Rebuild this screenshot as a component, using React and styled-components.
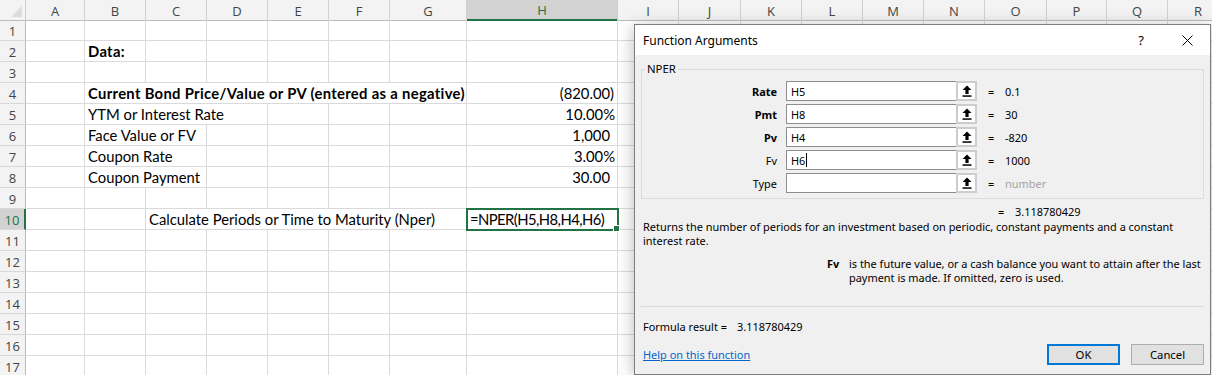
import React from 'react'
import styled, { createGlobalStyle } from 'styled-components'

const GlobalStyle = createGlobalStyle`
  html, body {
    margin: 0;
    padding: 0;
    overflow: hidden;
    background: #ffffff;
  }
`

const COLS = ['A', 'B', 'C', 'D', 'E', 'F', 'G', 'H', 'I', 'J', 'K', 'L', 'M', 'N', 'O', 'P', 'Q', 'R']
const WIDTHS = [26, 59, 61, 61, 61, 61, 61, 77, 151, 61, 62, 61, 61, 61, 61, 62, 60, 61, 61]
const TEMPLATE = WIDTHS.map((w) => w + 'px').join(' ')

// col index: A = 1 ... (0 is the row header)
const CELLS = {
  2: [{ col: 2, span: 1, text: 'Data:', bold: true }],
  4: [
    { col: 2, span: 6, text: 'Current Bond Price/Value or PV (entered as a negative)', bold: true },
    { col: 8, text: '(820.00)', right: true, pr: 3 },
  ],
  5: [
    { col: 2, span: 3, text: 'YTM or Interest Rate' },
    { col: 8, text: '10.00%', right: true, pr: 2 },
  ],
  6: [
    { col: 2, span: 2, text: 'Face Value or FV' },
    { col: 8, text: '1,000', right: true, pr: 7 },
  ],
  7: [
    { col: 2, span: 2, text: 'Coupon Rate' },
    { col: 8, text: '3.00%', right: true, pr: 2 },
  ],
  8: [
    { col: 2, span: 2, text: 'Coupon Payment' },
    { col: 8, text: '30.00', right: true, pr: 7 },
  ],
  10: [
    { col: 3, span: 5, text: 'Calculate Periods or Time to Maturity (Nper)' },
    { col: 8, text: '=NPER(H5,H8,H4,H6)', selected: true, ls: '-0.55px' },
  ],
}

const Sheet = styled.div`
  font-family: Lato, "Open Sans", sans-serif;
  font-size: 14.8px;
  color: #000;
  width: 1212px;
`

const Row = styled.div`
  display: grid;
  grid-template-columns: ${TEMPLATE};
  height: ${(p) => p.$h}px;
`

const HeadCell = styled.div`
  box-sizing: border-box;
  background: ${(p) => (p.$active ? '#d2d2d2' : '#f3f3f3')};
  color: ${(p) => (p.$active ? '#217346' : '#444')};
  border-right: 1px solid #d0d0d0;
  border-bottom: ${(p) => (p.$active ? '2px solid #217346' : '1px solid #bcbcbc')};
  display: flex;
  align-items: center;
  justify-content: center;
  font-family: "Open Sans", "Noto Sans", sans-serif;
  font-size: 13px;
  padding-top: 1px;
`

const Corner = styled(HeadCell)`
  position: relative;
  &::after {
    content: '';
    position: absolute;
    right: 3px;
    bottom: 3px;
    border-left: 11px solid transparent;
    border-bottom: 11px solid #dcdcdc;
  }
`

const RowHead = styled.div`
  box-sizing: border-box;
  background: ${(p) => (p.$active ? '#d2d2d2' : '#f3f3f3')};
  color: ${(p) => (p.$active ? '#217346' : '#444')};
  border-right: ${(p) => (p.$active ? '2px solid #217346' : '1px solid #bcbcbc')};
  border-bottom: 1px solid #d8d8d8;
  display: flex;
  align-items: center;
  justify-content: center;
  font-family: "Open Sans", "Noto Sans", sans-serif;
  font-size: 13px;
  padding-top: 1px;
`

const Cell = styled.div`
  box-sizing: border-box;
  position: relative;
  grid-column: span ${(p) => p.$span || 1};
  border-right: 1px solid #dadada;
  border-bottom: 1px solid #dadada;
  display: flex;
  align-items: flex-end;
  justify-content: ${(p) => (p.$right ? 'flex-end' : 'flex-start')};
  padding: 0 ${(p) => p.$pr || 3}px 1px 3px;
  font-weight: ${(p) => (p.$bold ? 700 : 400)};
  letter-spacing: ${(p) => p.$ls || (p.$bold ? '0.32px' : 'normal')};
  white-space: nowrap;
  outline: ${(p) => (p.$selected ? '2px solid #217346' : 'none')};
  outline-offset: -1px;
  z-index: ${(p) => (p.$selected ? 1 : 0)};
`

const FillHandle = styled.span`
  position: absolute;
  right: -3px;
  bottom: -3px;
  width: 5px;
  height: 5px;
  background: #217346;
  border: 1px solid #fff;
`

function SheetRow({ n }) {
  const cells = CELLS[n] || []
  const out = []
  let c = 1
  while (c < COLS.length + 1) {
    const cell = cells.find((x) => x.col === c)
    if (cell) {
      out.push(
        <Cell
          key={c}
          $span={cell.span}
          $bold={cell.bold}
          $right={cell.right}
          $pr={cell.pr}
          $ls={cell.ls}
          $selected={cell.selected}
        >
          {cell.text}
          {cell.selected && <FillHandle />}
        </Cell>
      )
      c += cell.span || 1
    } else {
      out.push(<Cell key={c} />)
      c += 1
    }
  }
  return (
    <Row $h={21}>
      <RowHead $active={n === 10}>{n}</RowHead>
      {out}
    </Row>
  )
}

/* ---------- dialog ---------- */

const Dialog = styled.div`
  position: absolute;
  left: 634px;
  top: 24px;
  width: 577px;
  height: 351px;
  box-sizing: border-box;
  border: 1px solid #7d7d7d;
  background: #f0f0f0;
  box-shadow: 0 3px 16px rgba(0, 0, 0, 0.28);
  font-family: "Segoe UI", "Noto Sans", sans-serif;
  font-size: 10.95px;
  color: #000;
  display: flex;
  flex-direction: column;
`

const TitleBar = styled.div`
  height: 30px;
  background: #ffffff;
  display: flex;
  align-items: center;
  padding: 0 0 0 8px;
  font-size: 12px;
`

const Title = styled.div`
  flex: 1;
`

const TitleButton = styled.div`
  width: 46px;
  height: 30px;
  display: flex;
  align-items: center;
  justify-content: center;
  font-size: 13px;
`

const Body = styled.div`
  flex: 1;
  padding: 14px 6px 0 6px;
  display: flex;
  flex-direction: column;
`

const Group = styled.fieldset`
  margin: 0;
  padding: 11px 0 4px 0;
  border: 1px solid #dcdcdc;
  height: 130px;
  box-sizing: border-box;
  display: flex;
  flex-direction: column;
  gap: 3px;
  position: relative;
`

const Legend = styled.div`
  position: absolute;
  top: -8px;
  left: 3px;
  padding: 0 2px;
  background: #f0f0f0;
  line-height: 14px;
  font-size: 11.3px;
`

const ArgRow = styled.div`
  display: flex;
  align-items: center;
  height: 20px;
`

const ArgLabel = styled.div`
  width: 135px;
  text-align: right;
  font-weight: ${(p) => (p.$bold ? 700 : 400)};
  margin-right: 9px;
`

const Input = styled.div`
  box-sizing: border-box;
  width: 170px;
  height: 20px;
  background: #fff;
  border: 1px solid #8e8e8e;
  border-right: none;
  padding: 0 4px;
  display: flex;
  align-items: center;
`

const Caret = styled.span`
  display: inline-block;
  width: 1px;
  height: 14px;
  background: #000;
  margin-left: 1px;
`

const RefButton = styled.div`
  box-sizing: border-box;
  width: 21px;
  height: 20px;
  background: #fff;
  border: 2px solid #cdcdcd;
  display: flex;
  align-items: center;
  justify-content: center;
`

const Eq = styled.div`
  width: 17px;
  margin-left: 11px;
`

const Value = styled.div`
  color: ${(p) => (p.$muted ? '#a3a3a3' : '#000')};
`

const ResultRow = styled.div`
  display: flex;
  align-items: center;
  height: 17px;
  padding-left: 346px;
  margin-top: 4px;
`

const Desc = styled.div`
  padding-left: 2px;
  line-height: 13.5px;
  white-space: nowrap;
`

const ArgDesc = styled.div`
  display: flex;
  margin-top: 10px;
  padding-left: 186px;
  line-height: 13.5px;
  white-space: nowrap;
`

const ArgDescName = styled.div`
  width: 22px;
  font-weight: 700;
`

const Separator = styled.div`
  height: 1px;
  background: #d9d9d9;
  margin-top: 22px;
`

const FormulaResult = styled.div`
  display: flex;
  margin-top: 12px;
  padding-left: 2px;
`

const FormulaLabel = styled.div`
  width: 94px;
`

const Footer = styled.div`
  display: flex;
  align-items: center;
  margin-top: 10px;
  padding-left: 2px;
`

const HelpLink = styled.a`
  color: #0066cc;
  text-decoration: underline;
  flex: 1;
`

const Button = styled.div`
  box-sizing: border-box;
  width: 73px;
  height: 21px;
  margin-left: ${(p) => p.$ml || 0}px;
  background: #e1e1e1;
  border: ${(p) => (p.$primary ? '2px solid #0078d7' : '1px solid #adadad')};
  display: flex;
  align-items: center;
  justify-content: center;
  font-size: 11.3px;
`

const ArrowIcon = () => (
  <svg width="10" height="12" viewBox="0 0 10 12">
    <polygon points="5,0.5 9.5,5 6.6,5 6.6,9 3.4,9 3.4,5 0.5,5" fill="#000" />
    <rect x="0.5" y="10.3" width="9" height="1.5" fill="#000" />
  </svg>
)

const CloseIcon = () => (
  <svg width="11" height="11" viewBox="0 0 11 11">
    <path d="M0.5 0.5 L10.5 10.5 M10.5 0.5 L0.5 10.5" stroke="#000" strokeWidth="1" />
  </svg>
)

const ARGS = [
  { name: 'Rate', bold: true, value: 'H5', result: '0.1' },
  { name: 'Pmt', bold: true, value: 'H8', result: '30' },
  { name: 'Pv', bold: true, value: 'H4', result: '-820' },
  { name: 'Fv', value: 'H6', result: '1000', caret: true },
  { name: 'Type', value: '', result: 'number', muted: true },
]

function FunctionDialog() {
  return (
    <Dialog>
      <TitleBar>
        <Title>Function Arguments</Title>
        <TitleButton>?</TitleButton>
        <TitleButton>
          <CloseIcon />
        </TitleButton>
      </TitleBar>
      <Body>
        <Group>
          <Legend>NPER</Legend>
          {ARGS.map((a) => (
            <ArgRow key={a.name}>
              <ArgLabel $bold={a.bold}>{a.name}</ArgLabel>
              <Input>
                {a.value}
                {a.caret && <Caret />}
              </Input>
              <RefButton>
                <ArrowIcon />
              </RefButton>
              <Eq>=</Eq>
              <Value $muted={a.muted}>{a.result}</Value>
            </ArgRow>
          ))}
        </Group>
        <ResultRow>
          <Eq>=</Eq>
          <Value>3.118780429</Value>
        </ResultRow>
        <Desc>
          Returns the number of periods for an investment based on periodic, constant payments and a constant
          <br />
          interest rate.
        </Desc>
        <ArgDesc>
          <ArgDescName>Fv</ArgDescName>
          <div>
            is the future value, or a cash balance you want to attain after the last
            <br />
            payment is made. If omitted, zero is used.
          </div>
        </ArgDesc>
        <Separator />
        <FormulaResult>
          <FormulaLabel>Formula result =</FormulaLabel>
          <div>3.118780429</div>
        </FormulaResult>
        <Footer>
          <HelpLink>Help on this function</HelpLink>
          <Button $primary>OK</Button>
          <Button $ml={11}>Cancel</Button>
        </Footer>
      </Body>
    </Dialog>
  )
}

export default function App() {
  const rows = []
  for (let i = 1; i <= 17; i++) rows.push(<SheetRow key={i} n={i} />)
  return (
    <>
      <GlobalStyle />
      <Sheet>
        <Row $h={20}>
          <Corner />
          {COLS.map((c) => (
            <HeadCell key={c} $active={c === 'H'}>
              {c}
            </HeadCell>
          ))}
        </Row>
        {rows}
      </Sheet>
      <FunctionDialog />
    </>
  )
}
